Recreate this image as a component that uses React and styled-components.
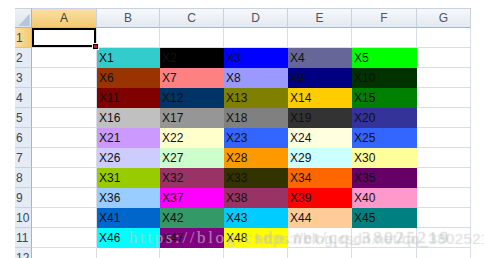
import React from 'react';
import styled, { createGlobalStyle } from 'styled-components';

const columns = [
    { name: 'A', width: 65 },
    { name: 'B', width: 63 },
    { name: 'C', width: 64 },
    { name: 'D', width: 64 },
    { name: 'E', width: 64 },
    { name: 'F', width: 65 },
    { name: 'G', width: 54 },
];

// one entry per coloured cell, columns B..F
const palette = [
    [['X1', '#33cccc'], ['X2', '#000000'], ['X3', '#0000ff'], ['X4', '#666699'], ['X5', '#00ff00']],
    [['X6', '#993300'], ['X7', '#ff8080'], ['X8', '#9999ff'], ['X9', '#000080'], ['X10', '#003300']],
    [['X11', '#800000'], ['X12', '#003366'], ['X13', '#808000'], ['X14', '#ffcc00'], ['X15', '#008000']],
    [['X16', '#c0c0c0'], ['X17', '#969696'], ['X18', '#808080'], ['X19', '#333333'], ['X20', '#333399']],
    [['X21', '#cc99ff'], ['X22', '#ffffcc'], ['X23', '#3366ff'], ['X24', '#ffffe0'], ['X25', '#3366ff']],
    [['X26', '#ccccff'], ['X27', '#ccffcc'], ['X28', '#ff9900'], ['X29', '#ccffff'], ['X30', '#ffff99']],
    [['X31', '#99cc00'], ['X32', '#993366'], ['X33', '#333300'], ['X34', '#ff6600'], ['X35', '#660066']],
    [['X36', '#99ccff'], ['X37', '#ff00ff'], ['X38', '#993366'], ['X39', '#ff0000'], ['X40', '#ff99cc']],
    [['X41', '#0066cc'], ['X42', '#339966'], ['X43', '#00ccff'], ['X44', '#ffcc99'], ['X45', '#008080']],
    [['X46', '#00ffff'], ['X47', '#800080'], ['X48', '#ffff00'], null, null],
];

const GlobalStyle = createGlobalStyle`
    html, body {
        margin: 0;
        padding: 0;
        background: #fff;
        overflow: hidden;
    }
    body {
        width: 484px;
        height: 258px;
        font-family: "Liberation Sans", Arial, sans-serif;
    }
`;

const App = () => {
    const rows = [[], ...palette, [null, null, null, null, null]];

    return (
        <>
            <GlobalStyle />
            <Page>
                <Sheet>
                    <Corner>
                        <CornerMark viewBox="0 0 17 20">
                            <polygon points="15,5 15,18 3,18" fill="#b7c5d8" />
                        </CornerMark>
                    </Corner>
                    {columns.map((col) => (
                        <ColHeader key={col.name} $active={col.name === 'A'}>
                            {col.name}
                        </ColHeader>
                    ))}

                    {rows.map((row, r) => (
                        <React.Fragment key={r}>
                            <RowHeader $active={r === 0}>{r + 1}</RowHeader>
                            <Cell $selected={r === 0}>
                                {r === 0 && <FillHandle />}
                            </Cell>
                            {[0, 1, 2, 3, 4].map((c) => {
                                const item = row[c];
                                return (
                                    <Cell key={c} $fill={item ? item[1] : null}>
                                        {item ? item[0] : ''}
                                    </Cell>
                                );
                            })}
                            <Cell />
                        </React.Fragment>
                    ))}

                    <Watermark>https://blog.csdn.net/qq_38025219</Watermark>
                    <WatermarkSans>https://blog.csdn.net/qq_38025210</WatermarkSans>
                </Sheet>
            </Page>
        </>
    );
};

export default App;


const Page = styled.div`
    padding: 8px 0 0 15px;
    width: 484px;
    height: 258px;
    box-sizing: border-box;
    overflow: hidden;
`;

const Sheet = styled.div`
    position: relative;
    display: grid;
    grid-template-columns: 17px ${columns.map((c) => `${c.width}px`).join(' ')};
    grid-auto-rows: 20px;
    width: fit-content;
`;

const Corner = styled.div`
    background: linear-gradient(#eef2f7, #dde5ef);
    border-right: 1px solid #9eb6ce;
    border-bottom: 1px solid #9eb6ce;
    border-top: 1px solid #c9d3df;
    box-sizing: border-box;
`;

const CornerMark = styled.svg`
    display: block;
    width: 17px;
    height: 19px;
`;

const ColHeader = styled.div`
    display: flex;
    align-items: center;
    justify-content: center;
    box-sizing: border-box;
    border-top: 1px solid #c9d3df;
    border-right: 1px solid #c5d2e0;
    border-bottom: 1px solid ${({ $active }) => ($active ? '#f2b44f' : '#9eb6ce')};
    background: ${({ $active }) =>
        $active ? 'linear-gradient(#fae0a8, #f5c96f)' : 'linear-gradient(#f6f8fb, #e3e9f1)'};
    color: ${({ $active }) => ($active ? '#3b3b3b' : '#4a5563')};
    font-size: 12px;
`;

const RowHeader = styled.div`
    display: flex;
    align-items: center;
    padding-left: 1px;
    box-sizing: border-box;
    border-right: 1px solid ${({ $active }) => ($active ? '#f2b44f' : '#9eb6ce')};
    border-bottom: 1px solid ${({ $active }) => ($active ? '#f0c070' : '#c5d2e0')};
    background: ${({ $active }) =>
        $active ? 'linear-gradient(90deg, #fae0a8, #f5c96f)' : '#e4ebf5'};
    color: #3a4656;
    font-size: 12px;
`;

const Cell = styled.div`
    position: relative;
    display: flex;
    align-items: center;
    padding: 1px 0 0 2px;
    box-sizing: border-box;
    background: ${({ $fill }) => $fill || '#fff'};
    border-right: 1px solid ${({ $fill }) => $fill || '#d8dde6'};
    border-bottom: 1px solid ${({ $fill }) => $fill || '#d8dde6'};
    box-shadow: ${({ $selected }) => ($selected ? 'inset 0 0 0 2px #000' : 'none')};
    color: #111;
    font-size: 12px;
    white-space: nowrap;
`;

const FillHandle = styled.span`
    position: absolute;
    right: -3px;
    bottom: -3px;
    width: 5px;
    height: 5px;
    background: #000;
    border: 1px solid #fff;
    z-index: 2;
    &::after {
        content: '';
        position: absolute;
        left: 1px;
        top: 1px;
        width: 3px;
        height: 3px;
        background: #c0202a;
    }
`;

const Watermark = styled.div`
    position: absolute;
    left: 114px;
    top: 220px;
    font-family: "Liberation Serif", "Times New Roman", serif;
    font-size: 17px;
    letter-spacing: 2.6px;
    color: rgba(255, 255, 255, 0.4);
    text-shadow: 0 0 1px rgba(120, 120, 120, 0.45);
    white-space: nowrap;
    pointer-events: none;
`;

const WatermarkSans = styled.div`
    position: absolute;
    left: 240px;
    top: 222px;
    font-family: "Liberation Sans", Arial, sans-serif;
    font-size: 15px;
    letter-spacing: 0.4px;
    color: rgba(255, 255, 255, 0.3);
    text-shadow: 0 0 1px rgba(120, 120, 120, 0.35);
    white-space: nowrap;
    pointer-events: none;
`;
